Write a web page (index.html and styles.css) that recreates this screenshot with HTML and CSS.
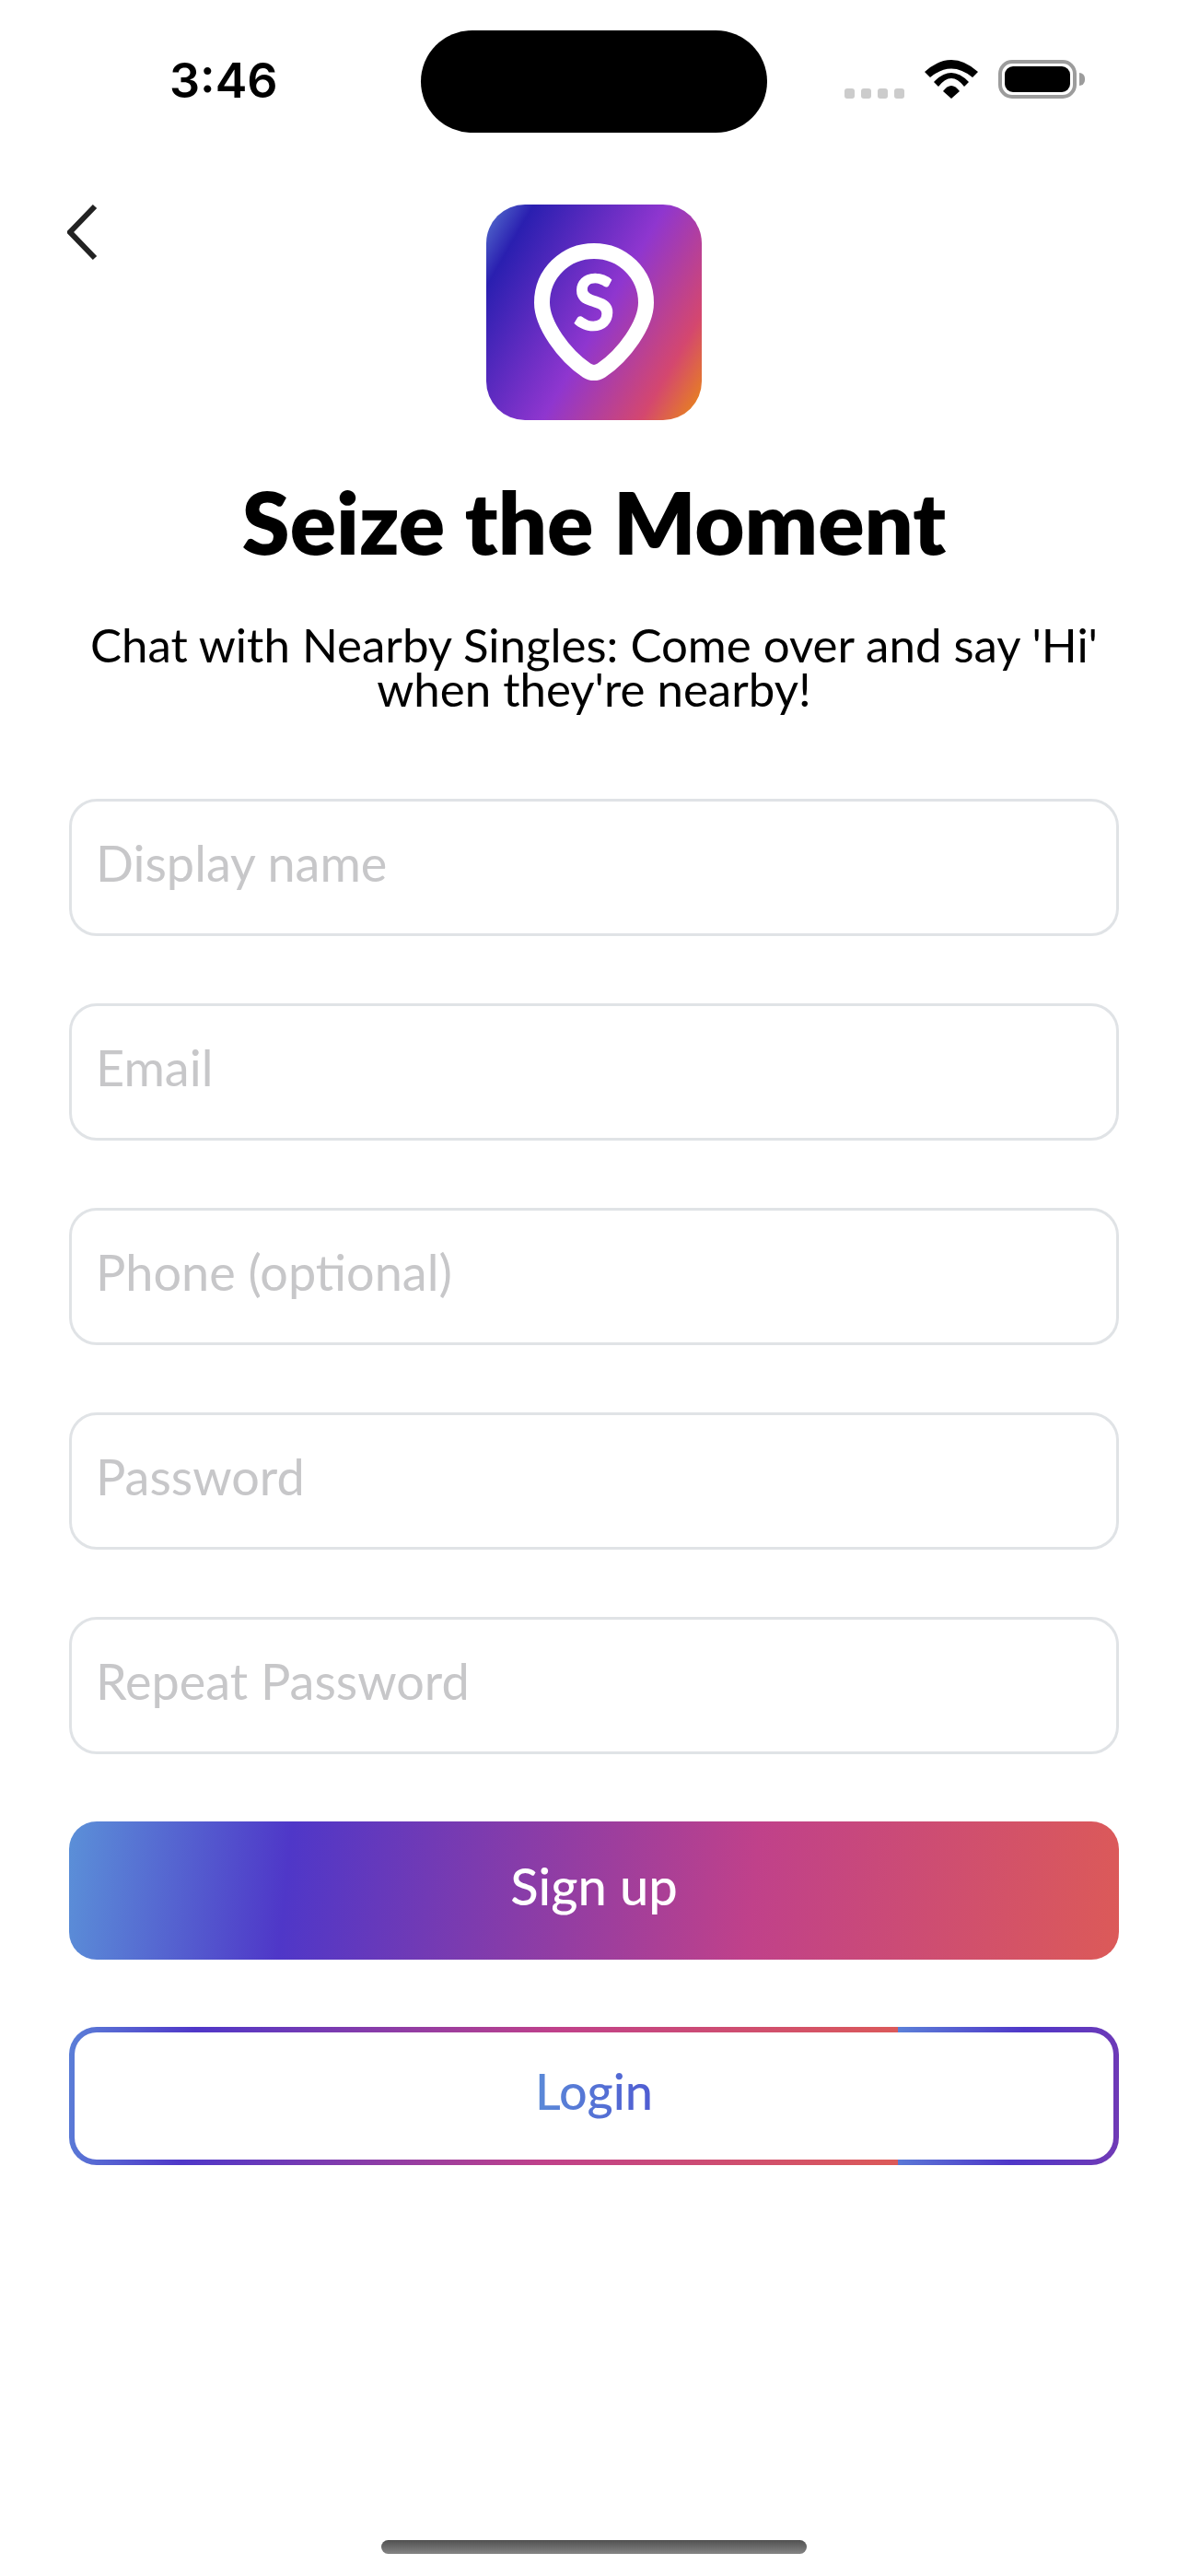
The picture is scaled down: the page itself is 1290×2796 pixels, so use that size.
FILE: index.html

```html
<!DOCTYPE html>
<html lang="en">
<head>
  <meta charset="UTF-8">
  <meta name="viewport" content="width=device-width, initial-scale=1.0">
  <title>Sign up</title>
  <link rel="stylesheet" href="styles.css">
</head>
<body>
  <div class="status-bar">
    <div class="time">3:46</div>
    <div class="island"></div>
    <div class="status-icons">
      <div class="signal"><span></span><span></span><span></span><span></span></div>
      <svg class="wifi" width="58" height="42" viewBox="0 0 58 42">
        <path d="M0 13Q29 -13 58 13L52 19Q29 0 6 19Z"/>
        <path d="M10 24Q29 4 48 24L43 29Q29 11 15 29Z"/>
        <path d="M20 34Q29 22 38 34L29 42Z"/>
      </svg>
      <div class="battery"><div class="battery-level"></div></div>
      <div class="battery-cap"></div>
    </div>
  </div>

  <div class="container">
    <div class="top-row">
      <a class="back" href="#">
        <svg width="40" height="64" viewBox="0 0 40 64">
          <path d="M30 4L3 32L30 60" fill="none" stroke="#222" stroke-width="6"/>
        </svg>
      </a>
      <svg class="logo" width="234" height="234" viewBox="0 0 234 234">
        <path d="M117 50.5C148 50.5 173.5 75 173.5 106.5C173.5 130 150 163 125 180Q117 185 109 180C84 163 60.5 130 60.5 106.5C60.5 75 86 50.5 117 50.5Z" fill="none" stroke="#fff" stroke-width="17" stroke-linejoin="round"/>
        <text class="logo-letter" x="117" y="136" text-anchor="middle">S</text>
      </svg>
    </div>

    <h1>Seize the Moment</h1>
    <p class="intro">Chat with Nearby Singles: Come over and say 'Hi'<br>when they're nearby!</p>

    <form class="form-signup">
      <input type="text" placeholder="Display name">
      <input type="email" placeholder="Email">
      <input type="tel" placeholder="Phone (optional)">
      <input type="password" placeholder="Password">
      <input type="password" placeholder="Repeat Password">
      <button type="submit" class="btn-signup">Sign up</button>
      <button type="button" class="btn-login"><span>Login</span></button>
    </form>
  </div>

  <div class="home-indicator"></div>
</body>
</html>
```

FILE: styles.css

```css
* {
  box-sizing: border-box;
}
body {
  margin: 0;
  height: 2796px;
  background-color: #fff;
  color: #000;
  font-family: 'Lato', sans-serif;
  display: flex;
  flex-direction: column;
}
.status-bar {
  display: flex;
  align-items: flex-start;
  height: 222px;
  padding-top: 33px;
  padding-right: 112px;
}
.time {
  width: 457px;
  padding-left: 184px;
  margin-top: 25px;
  font-family: 'Inter', sans-serif;
  font-size: 52px;
  font-weight: 600;
  line-height: 60px;
}
.island {
  width: 376px;
  height: 111px;
  background-color: #000;
  border-radius: 56px;
}
.status-icons {
  flex: 1;
  display: flex;
  justify-content: flex-end;
  align-items: flex-end;
  height: 74px;
}
.signal {
  display: flex;
  gap: 7px;
  margin-right: 22px;
}
.signal span {
  width: 11px;
  height: 11px;
  border-radius: 3px;
  background-color: #ccc;
}
.wifi {
  display: block;
  margin-right: 22px;
}
.battery {
  width: 85px;
  height: 42px;
  padding: 3px;
  border: 4px solid #9c9c9c;
  border-radius: 15px;
}
.battery-level {
  height: 100%;
  background-color: #000;
  border-radius: 9px;
}
.battery-cap {
  width: 6px;
  height: 14px;
  margin: 0 0 14px 3px;
  background-color: #9c9c9c;
  border-radius: 0 7px 7px 0;
}
.container {
  flex: 1;
  padding: 0 75px;
}
.top-row {
  display: grid;
  grid-template-columns: 1fr 234px 1fr;
}
.back {
  display: block;
  margin-top: -2px;
  margin-left: -2px;
  filter: blur(0.7px);
}
.back svg {
  display: block;
}
.logo {
  display: block;
  border-radius: 42px;
  background: linear-gradient(120deg, #5a78d2 0%, #2a1fb0 14%, #8f36cf 53%, #d4476f 82%, #ea8a14 99%);
}
.logo-letter {
  fill: #fff;
  stroke: #fff;
  stroke-width: 1.5px;
  font-family: 'Lato', sans-serif;
  font-size: 82px;
  font-weight: 700;
}
h1 {
  margin: 55px 0 0;
  font-size: 93.5px;
  font-weight: 800;
  line-height: 110px;
  text-align: center;
}
.intro {
  margin: 55px 0 0;
  font-size: 51px;
  line-height: 48px;
  text-align: center;
}
.form-signup {
  display: flex;
  flex-direction: column;
  gap: 73px;
  margin-top: 95px;
}
input {
  display: block;
  width: 100%;
  height: 149px;
  padding: 0 26px 10px;
  background-color: #fff;
  border: 3px solid #e0e3e6;
  border-radius: 30px;
  font-family: 'Lato', sans-serif;
  font-size: 54px;
  outline: none;
}
input::placeholder {
  color: #c7c7c9;
  opacity: 1;
}
button {
  display: block;
  width: 100%;
  height: 150px;
  padding: 0 0 12px;
  border-radius: 30px;
  font-family: 'Lato', sans-serif;
  font-size: 56px;
  font-weight: 500;
  cursor: pointer;
}
.btn-signup {
  border: none;
  color: #fff;
  background: linear-gradient(96deg, #5b90d8 0%, #4f37c8 21%, #c0418a 65%, #dc5a58 100%);
}
.btn-login {
  border: 6px solid transparent;
  font-size: 54px;
  background:
    linear-gradient(#fff, #fff) padding-box,
    linear-gradient(96deg, #5b80d8 0%, #4f37c8 15%, #c0418a 58%, #dc5a58 100%) 0 0 / 900px 100% repeat-x border-box;
}
.btn-login span {
  color: #5b84d8;
  background: linear-gradient(90deg, #5b8ad8, #4f5cd2);
  -webkit-background-clip: text;
  background-clip: text;
  -webkit-text-fill-color: transparent;
}
.home-indicator {
  width: 462px;
  height: 15px;
  margin: 0 auto 24px;
  border-radius: 8px;
  background: linear-gradient(#505050, #858585);
}
```
